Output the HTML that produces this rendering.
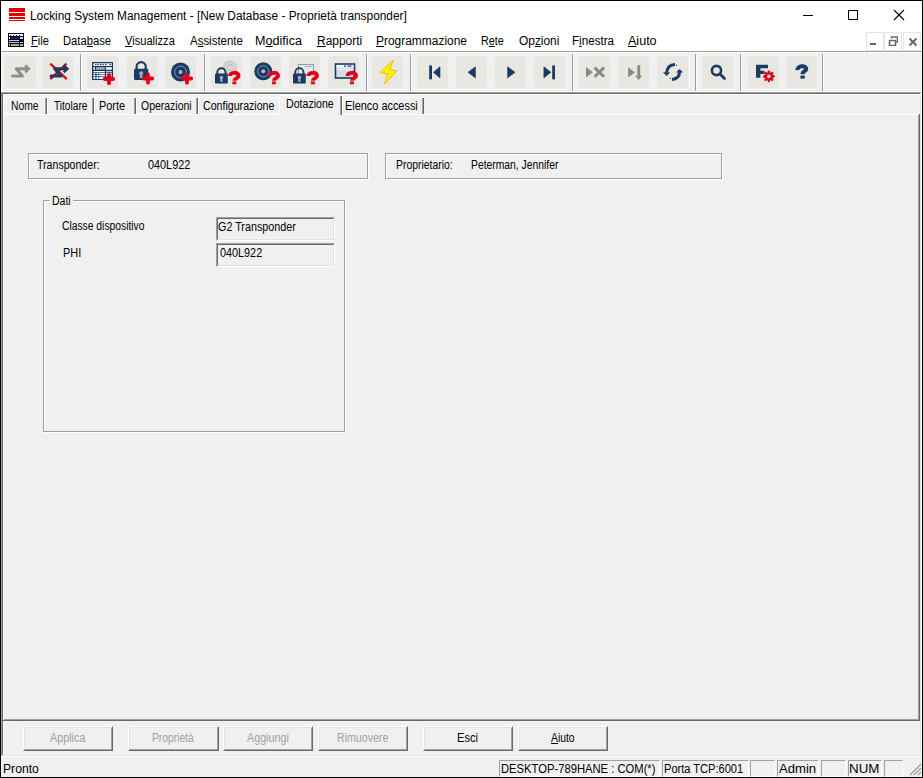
<!DOCTYPE html>
<html><head><meta charset="utf-8"><style>
html,body{margin:0;padding:0}
body{width:923px;height:778px;position:relative;overflow:hidden;background:#f0f0f0;font-family:"Liberation Sans", sans-serif}
body>div,body>span,body>svg{position:absolute;box-sizing:content-box}
.t{white-space:nowrap;line-height:1;transform-origin:0 0}
u{text-decoration:underline;text-underline-offset:1px}
</style></head><body>
<div style="left:0px;top:0px;width:923px;height:778px;background:#f0f0f0;"></div>
<div style="left:1px;top:1px;width:921px;height:50px;background:#ffffff;"></div>
<div style="left:0px;top:0px;width:923px;height:1px;background:#000000;"></div>
<div style="left:0px;top:0px;width:1px;height:778px;background:#000000;"></div>
<div style="left:922px;top:0px;width:1px;height:778px;background:#000000;"></div>
<div style="left:0px;top:777px;width:923px;height:1px;background:#000000;"></div>
<div style="left:9px;top:8px;width:16px;height:4px;background:#e00000;"></div>
<div style="left:9px;top:13px;width:16px;height:3px;background:#e00000;"></div>
<div style="left:9px;top:17px;width:16px;height:2px;background:#e00000;"></div>
<div style="left:9px;top:20px;width:16px;height:1px;background:#e00000;"></div>
<div style="left:803px;top:15px;width:10px;height:1px;background:#000;"></div>
<div style="left:848px;top:10px;width:8px;height:8px;border:1px solid #000"></div>
<svg style="left:893px;top:9px" width="12" height="12"><path d="M1 1L11 11M11 1L1 11" stroke="#000" stroke-width="1.1"/></svg>
<svg style="left:8px;top:33px" width="16" height="14" viewBox="0 0 16 14">
<rect x="0" y="0" width="16" height="14" fill="#000"/>
<rect x="1" y="1" width="14" height="2" fill="#fff"/>
<rect x="2" y="2" width="1" height="1" fill="#00c"/><rect x="5" y="2" width="1" height="1" fill="#00c"/><rect x="8" y="2" width="1" height="1" fill="#00c"/><rect x="11" y="2" width="1" height="1" fill="#00c"/>
<rect x="1" y="4" width="1" height="2" fill="#fff"/><rect x="3" y="4" width="8" height="2" fill="#0018a8"/><rect x="12" y="4" width="3" height="2" fill="#ddd"/>
<rect x="1" y="7" width="10" height="1" fill="#ccc"/><rect x="12" y="7" width="3" height="1" fill="#0018a8"/>
<rect x="1" y="9" width="10" height="1" fill="#ccc"/><rect x="12" y="9" width="3" height="1" fill="#ccc"/>
<rect x="1" y="11" width="1" height="2" fill="#ccc"/><rect x="3" y="11" width="8" height="2" fill="#aaa"/><rect x="12" y="11" width="3" height="2" fill="#aaa"/>
</svg>
<div style="left:866px;top:32px;width:16px;height:17px;border:1px solid #e6e6e6"></div>
<div style="left:884px;top:32px;width:16px;height:17px;border:1px solid #e6e6e6"></div>
<div style="left:903px;top:32px;width:16px;height:17px;border:1px solid #e6e6e6"></div>
<div style="left:870px;top:43px;width:6px;height:2px;background:#5f6873;"></div>
<svg style="left:888px;top:36px" width="10" height="10"><rect x="1.5" y="4.5" width="6" height="5" fill="none" stroke="#5f6873" stroke-width="1.5"/><path d="M3.5 2.5V1h6v5h-1.5" fill="none" stroke="#5f6873" stroke-width="1.5"/></svg>
<svg style="left:908px;top:37px" width="10" height="10"><path d="M1.5 1.5L8.5 8.5M8.5 1.5L1.5 8.5" stroke="#5f6873" stroke-width="2"/></svg>
<div style="left:1px;top:51px;width:921px;height:1px;background:#a0a0a0;"></div>
<div style="left:1px;top:52px;width:921px;height:1px;background:#ffffff;"></div>
<div style="left:1px;top:52px;width:1px;height:40px;background:#ffffff;"></div>
<div style="left:1px;top:91px;width:921px;height:1px;background:#ffffff;"></div>
<div style="left:5px;top:56px;width:31px;height:32px;background:#e8e7e1;border-radius:4px"></div>
<div style="left:42px;top:56px;width:31px;height:32px;background:#e8e7e1;border-radius:4px"></div>
<div style="left:87px;top:56px;width:31px;height:32px;background:#e8e7e1;border-radius:4px"></div>
<div style="left:127px;top:56px;width:31px;height:32px;background:#e8e7e1;border-radius:4px"></div>
<div style="left:165px;top:56px;width:31px;height:32px;background:#e8e7e1;border-radius:4px"></div>
<div style="left:211px;top:56px;width:31px;height:32px;background:#e8e7e1;border-radius:4px"></div>
<div style="left:250px;top:56px;width:31px;height:32px;background:#e8e7e1;border-radius:4px"></div>
<div style="left:289px;top:56px;width:31px;height:32px;background:#e8e7e1;border-radius:4px"></div>
<div style="left:328px;top:56px;width:31px;height:32px;background:#e8e7e1;border-radius:4px"></div>
<div style="left:372px;top:56px;width:31px;height:32px;background:#e8e7e1;border-radius:4px"></div>
<div style="left:417px;top:56px;width:31px;height:32px;background:#e8e7e1;border-radius:4px"></div>
<div style="left:456px;top:56px;width:31px;height:32px;background:#e8e7e1;border-radius:4px"></div>
<div style="left:495px;top:56px;width:31px;height:32px;background:#e8e7e1;border-radius:4px"></div>
<div style="left:534px;top:56px;width:31px;height:32px;background:#e8e7e1;border-radius:4px"></div>
<div style="left:579px;top:56px;width:31px;height:32px;background:#e8e7e1;border-radius:4px"></div>
<div style="left:618px;top:56px;width:31px;height:32px;background:#e8e7e1;border-radius:4px"></div>
<div style="left:657px;top:56px;width:31px;height:32px;background:#e8e7e1;border-radius:4px"></div>
<div style="left:702px;top:56px;width:31px;height:32px;background:#e8e7e1;border-radius:4px"></div>
<div style="left:748px;top:56px;width:31px;height:32px;background:#e8e7e1;border-radius:4px"></div>
<div style="left:786px;top:56px;width:31px;height:32px;background:#e8e7e1;border-radius:4px"></div>
<div style="left:80px;top:54px;width:1px;height:37px;background:#9a9a9a;"></div>
<div style="left:81px;top:54px;width:1px;height:37px;background:#ffffff;"></div>
<div style="left:204px;top:54px;width:1px;height:37px;background:#9a9a9a;"></div>
<div style="left:205px;top:54px;width:1px;height:37px;background:#ffffff;"></div>
<div style="left:366px;top:54px;width:1px;height:37px;background:#9a9a9a;"></div>
<div style="left:367px;top:54px;width:1px;height:37px;background:#ffffff;"></div>
<div style="left:410px;top:54px;width:1px;height:37px;background:#9a9a9a;"></div>
<div style="left:411px;top:54px;width:1px;height:37px;background:#ffffff;"></div>
<div style="left:572px;top:54px;width:1px;height:37px;background:#9a9a9a;"></div>
<div style="left:573px;top:54px;width:1px;height:37px;background:#ffffff;"></div>
<div style="left:695px;top:54px;width:1px;height:37px;background:#9a9a9a;"></div>
<div style="left:696px;top:54px;width:1px;height:37px;background:#ffffff;"></div>
<div style="left:740px;top:54px;width:1px;height:37px;background:#9a9a9a;"></div>
<div style="left:741px;top:54px;width:1px;height:37px;background:#ffffff;"></div>
<div style="left:822px;top:54px;width:1px;height:37px;background:#9a9a9a;"></div>
<div style="left:823px;top:54px;width:1px;height:37px;background:#ffffff;"></div>
<svg style="left:0;top:0" width="923" height="778"><path d="M12.5 76H22.5L16.2 68.8H27.5" fill="none" stroke="#8e8e8e" stroke-width="3" stroke-linejoin="round" stroke-linecap="round"/><path d="M25.2 65.4L28.8 68.8L25.2 72.2" fill="none" stroke="#8e8e8e" stroke-width="2.6" stroke-linejoin="miter"/><path d="M50.3 63.6L66.8 79.2M66.5 63.6L50.3 79.2" stroke="#e3001b" stroke-width="2.3"/><path d="M51.0 76H61.0L54.7 68.8H66.0" fill="none" stroke="#1a3a64" stroke-width="3" stroke-linejoin="round" stroke-linecap="round"/><path d="M63.7 65.4L67.3 68.8L63.7 72.2" fill="none" stroke="#1a3a64" stroke-width="2.6" stroke-linejoin="miter"/><rect x="92" y="62" width="21" height="18" fill="#1a3a64"/><rect x="93.3" y="63.3" width="18.5" height="2.6" fill="#fff"/><rect x="95" y="64.1" width="1.6" height="1" fill="#1a3a64"/><rect x="97.5" y="64.1" width="1.6" height="1" fill="#1a3a64"/><rect x="100" y="64.1" width="1.6" height="1" fill="#1a3a64"/><rect x="102.5" y="64.1" width="1.6" height="1" fill="#1a3a64"/><rect x="105" y="64.1" width="1.6" height="1" fill="#1a3a64"/><rect x="109.5" y="64.1" width="1.6" height="1" fill="#1a3a64"/><rect x="93.4" y="67.2" width="1.6" height="2.5" fill="#fff"/><rect x="96" y="67.2" width="8.8" height="2.5" fill="#a9a7c6"/><rect x="106" y="67.2" width="5.8" height="2.5" fill="#fff"/><rect x="93.4" y="71" width="11.4" height="1.3" fill="#fff"/><rect x="106" y="71" width="5.8" height="1.3" fill="#c8cad8"/><rect x="93.4" y="73" width="2" height="1.4" fill="#fff"/><rect x="96.5" y="73" width="2" height="1.4" fill="#fff"/><rect x="99.2" y="73" width="5.6" height="1.4" fill="#fff"/><rect x="106" y="73" width="5.8" height="1.4" fill="#fff"/><rect x="93.4" y="75" width="2" height="1.4" fill="#fff"/><rect x="96.5" y="75" width="2" height="1.4" fill="#fff"/><rect x="99.2" y="75" width="5.6" height="1.4" fill="#fff"/><rect x="106" y="75" width="5.8" height="1.4" fill="#fff"/><rect x="93.4" y="77.1" width="2" height="1.9" fill="#fff"/><rect x="96.5" y="77.1" width="2" height="1.9" fill="#fff"/><rect x="99.2" y="77.1" width="4.5" height="1.9" fill="#fff"/><path d="M104.8 79H113.2M109 74.8V83.2" stroke="#e3001b" stroke-width="3.8" stroke-linecap="round"/><path d="M136.574 69.8V66.6485A4.5760000000000005 4.5760000000000005 0 0 1 145.726 66.6485V69.8" fill="none" stroke="#1a3a64" stroke-width="2.15"/><rect x="134" y="68.8" width="14.3" height="11.200000000000003" rx="1.2" fill="#1a3a64"/><circle cx="141.15" cy="73.28" r="2.00" fill="#a8a6c0"/><path d="M140.15 73.28H142.15L142.58 77.98H139.72Z" fill="#a8a6c0"/><path d="M143.8 78.5H152.2M148 74.3V82.7" stroke="#e3001b" stroke-width="3.8" stroke-linecap="round"/><circle cx="180.5" cy="72" r="9.5" fill="#1a3a64"/><circle cx="180.5" cy="72" r="5.89" fill="none" stroke="#8ea0b8" stroke-width="0.9"/><circle cx="180.5" cy="72" r="2" fill="#b8b4c8"/><path d="M182.8 78.5H191.2M187 74.3V82.7" stroke="#e3001b" stroke-width="3.8" stroke-linecap="round"/><circle cx="230" cy="67.5" r="7" fill="#c9c9c9"/><circle cx="230" cy="67.5" r="4.5" fill="none" stroke="#e4e4e4" stroke-width="1"/><circle cx="230" cy="67.5" r="1.5" fill="#e4e4e4"/><path d="M217.304 74.4V72.256A4.096 4.096 0 0 1 225.496 72.256V74.4" fill="none" stroke="#1a3a64" stroke-width="1.92"/><rect x="215" y="73.4" width="12.8" height="10.199999999999989" rx="1.2" fill="#1a3a64"/><circle cx="221.4" cy="77.48" r="1.79" fill="#a8a6c0"/><path d="M220.50 77.48H222.30L222.68 81.76H220.12Z" fill="#a8a6c0"/><path d="M230 76.1C230 71.9 238.6 71.7 238.6 75.7C238.6 78.3 234.4 78.1 234.4 80.7" fill="none" stroke="#e3001b" stroke-width="3.9"/><rect x="232.4" y="81.5" width="4" height="2.8" fill="#e3001b"/><circle cx="263.3" cy="71.3" r="9" fill="#1a3a64"/><circle cx="263.3" cy="71.3" r="5.58" fill="none" stroke="#8ea0b8" stroke-width="0.9"/><circle cx="263.3" cy="71.3" r="2" fill="#b8b4c8"/><path d="M269.5 76.1C269.5 71.9 278.1 71.7 278.1 75.7C278.1 78.3 273.9 78.1 273.9 80.7" fill="none" stroke="#e3001b" stroke-width="3.9"/><rect x="271.9" y="81.5" width="4" height="2.8" fill="#e3001b"/><rect x="298.5" y="64.5" width="15" height="10" fill="#e9e9ec" stroke="#8f9bb0" stroke-width="1"/><rect x="305" y="66" width="1.5" height="1" fill="#8f9bb0"/><rect x="307.5" y="66" width="4" height="1" fill="#8f9bb0"/><path d="M295.304 74.4V72.256A4.096 4.096 0 0 1 303.496 72.256V74.4" fill="none" stroke="#1a3a64" stroke-width="1.92"/><rect x="293" y="73.4" width="12.8" height="10.199999999999989" rx="1.2" fill="#1a3a64"/><circle cx="299.4" cy="77.48" r="1.79" fill="#a8a6c0"/><path d="M298.50 77.48H300.30L300.68 81.76H298.12Z" fill="#a8a6c0"/><path d="M308.5 76.1C308.5 71.9 317.1 71.7 317.1 75.7C317.1 78.3 312.9 78.1 312.9 80.7" fill="none" stroke="#e3001b" stroke-width="3.9"/><rect x="310.9" y="81.5" width="4" height="2.8" fill="#e3001b"/><rect x="335.5" y="64" width="19" height="14" fill="#d6dce6" stroke="#1a3a64" stroke-width="1.6"/><rect x="336.5" y="65" width="17" height="2.5" fill="#f4f6fa"/><rect x="336.5" y="69" width="17" height="1" fill="#eef1f6"/><rect x="344" y="65.5" width="2" height="1.2" fill="#1a3a64"/><rect x="347.5" y="65.5" width="4" height="1.2" fill="#1a3a64"/><path d="M347.5 76.1C347.5 71.9 356.1 71.7 356.1 75.7C356.1 78.3 351.9 78.1 351.9 80.7" fill="none" stroke="#e3001b" stroke-width="3.9"/><rect x="349.9" y="81.5" width="4" height="2.8" fill="#e3001b"/><path d="M393 60L380 72.5L387.5 74L384.5 84L397 71L390 69.5Z" fill="#fff000" stroke="#f2b800" stroke-width="0.9" stroke-linejoin="round"/><rect x="429.2" y="65.2" width="2.8" height="14.3" rx="1" fill="#1a3a64"/><path d="M440 66.8V77.9L433.4 72.3Z" fill="#1a3a64" stroke="#1a3a64" stroke-width="0.6" stroke-linejoin="round"/><path d="M475.4 66.8V77.9L468 72.3Z" fill="#1a3a64" stroke="#1a3a64" stroke-width="0.6" stroke-linejoin="round"/><path d="M507.6 66.8V77.9L515 72.3Z" fill="#1a3a64" stroke="#1a3a64" stroke-width="0.6" stroke-linejoin="round"/><rect x="552.2" y="65.2" width="2.8" height="14.3" rx="1" fill="#1a3a64"/><path d="M543.9 66.8V77.9L550.9 72.3Z" fill="#1a3a64" stroke="#1a3a64" stroke-width="0.6" stroke-linejoin="round"/><path d="M586 66.8V77.6L592.8 72.2Z" fill="#8a8a8a"/><path d="M594.6 67.6L604 76.8M604 67.6L594.6 76.8" stroke="#8a8a8a" stroke-width="3"/><path d="M628.1 67.2V77.6L634.9 72.4Z" fill="#8a8a8a"/><rect x="637.3" y="65.2" width="2.9" height="11" fill="#8a8a8a"/><path d="M634.9 75.8H642.2L638.7 80.1Z" fill="#8a8a8a"/><path d="M675 64.6Q667.5 65 666.6 72.6" fill="none" stroke="#1a3a64" stroke-width="3"/><path d="M663 72.2H670.2L666.6 76Z" fill="#1a3a64"/><path d="M672 79.4Q679.2 79 679.6 72.2" fill="none" stroke="#1a3a64" stroke-width="3"/><path d="M676 72.6H683.2L679.6 69Z" fill="#1a3a64"/><circle cx="676.5" cy="65.2" r="0.6" fill="#1a3a64"/><circle cx="670.4" cy="78.4" r="0.6" fill="#1a3a64"/><circle cx="716.5" cy="70.5" r="4.6" fill="none" stroke="#1a3a64" stroke-width="2.6"/><path d="M720 74L724.5 78.5" stroke="#1a3a64" stroke-width="2.8" stroke-linecap="round"/><path d="M756 64.8H768V68.2H760.4V70.8H764.4V74H760.4V77.8H756Z" fill="#1a3a64"/><circle cx="768.9" cy="76.4" r="4.8" fill="#e8e7e1"/><circle cx="773.50" cy="76.40" r="1.3" fill="#e3001b"/><circle cx="772.15" cy="79.65" r="1.3" fill="#e3001b"/><circle cx="768.90" cy="81.00" r="1.3" fill="#e3001b"/><circle cx="765.65" cy="79.65" r="1.3" fill="#e3001b"/><circle cx="764.30" cy="76.40" r="1.3" fill="#e3001b"/><circle cx="765.65" cy="73.15" r="1.3" fill="#e3001b"/><circle cx="768.90" cy="71.80" r="1.3" fill="#e3001b"/><circle cx="772.15" cy="73.15" r="1.3" fill="#e3001b"/><circle cx="768.9" cy="76.4" r="3" fill="none" stroke="#e3001b" stroke-width="2.4"/><path d="M797.4 70.2C797 65.5 806.3 64.8 806.3 69C806.3 71.2 802.5 71.4 802.5 73.6V74.2" fill="none" stroke="#1a3a64" stroke-width="4"/><rect x="800.4" y="75.6" width="4.4" height="3" fill="#1a3a64"/></svg>
<div style="left:1px;top:92px;width:921px;height:1px;background:#a0a0a0;"></div>
<div style="left:1px;top:93px;width:920px;height:1px;background:#696969;"></div>
<div style="left:1px;top:92px;width:1px;height:665px;background:#a0a0a0;"></div>
<div style="left:2px;top:93px;width:1px;height:663px;background:#696969;"></div>
<div style="left:921px;top:92px;width:1px;height:665px;background:#ffffff;"></div>
<div style="left:920px;top:93px;width:1px;height:663px;background:#e3e3e3;"></div>
<div style="left:1px;top:756px;width:921px;height:1px;background:#ffffff;"></div>
<div style="left:2px;top:755px;width:919px;height:1px;background:#e3e3e3;"></div>
<div style="left:3px;top:94px;width:917px;height:1px;background:#ffffff;"></div>
<div style="left:3px;top:94px;width:1px;height:661px;background:#ffffff;"></div>
<div style="left:3px;top:114px;width:917px;height:1px;background:#ffffff;"></div>
<div style="left:3px;top:114px;width:1px;height:607px;background:#ffffff;"></div>
<div style="left:919px;top:114px;width:1px;height:607px;background:#696969;"></div>
<div style="left:918px;top:115px;width:1px;height:605px;background:#a0a0a0;"></div>
<div style="left:3px;top:720px;width:917px;height:1px;background:#696969;"></div>
<div style="left:4px;top:719px;width:915px;height:1px;background:#a0a0a0;"></div>
<div style="left:6px;top:97px;width:41px;height:17px;background:#f0f0f0"></div>
<div style="left:7px;top:97px;width:39px;height:1px;background:#ffffff;"></div>
<div style="left:6px;top:98px;width:1px;height:16px;background:#ffffff;"></div>
<div style="left:46px;top:98px;width:1px;height:16px;background:#696969;"></div>
<div style="left:45px;top:98px;width:1px;height:16px;background:#a0a0a0;"></div>
<div style="left:47px;top:97px;width:47px;height:17px;background:#f0f0f0"></div>
<div style="left:48px;top:97px;width:45px;height:1px;background:#ffffff;"></div>
<div style="left:47px;top:98px;width:1px;height:16px;background:#ffffff;"></div>
<div style="left:93px;top:98px;width:1px;height:16px;background:#696969;"></div>
<div style="left:92px;top:98px;width:1px;height:16px;background:#a0a0a0;"></div>
<div style="left:94px;top:97px;width:42px;height:17px;background:#f0f0f0"></div>
<div style="left:95px;top:97px;width:40px;height:1px;background:#ffffff;"></div>
<div style="left:94px;top:98px;width:1px;height:16px;background:#ffffff;"></div>
<div style="left:135px;top:98px;width:1px;height:16px;background:#696969;"></div>
<div style="left:134px;top:98px;width:1px;height:16px;background:#a0a0a0;"></div>
<div style="left:136px;top:97px;width:62px;height:17px;background:#f0f0f0"></div>
<div style="left:137px;top:97px;width:60px;height:1px;background:#ffffff;"></div>
<div style="left:136px;top:98px;width:1px;height:16px;background:#ffffff;"></div>
<div style="left:197px;top:98px;width:1px;height:16px;background:#696969;"></div>
<div style="left:196px;top:98px;width:1px;height:16px;background:#a0a0a0;"></div>
<div style="left:198px;top:97px;width:84px;height:17px;background:#f0f0f0"></div>
<div style="left:199px;top:97px;width:82px;height:1px;background:#ffffff;"></div>
<div style="left:198px;top:98px;width:1px;height:16px;background:#ffffff;"></div>
<div style="left:281px;top:98px;width:1px;height:16px;background:#696969;"></div>
<div style="left:280px;top:98px;width:1px;height:16px;background:#a0a0a0;"></div>
<div style="left:342px;top:97px;width:82px;height:17px;background:#f0f0f0"></div>
<div style="left:343px;top:97px;width:80px;height:1px;background:#ffffff;"></div>
<div style="left:342px;top:98px;width:1px;height:16px;background:#ffffff;"></div>
<div style="left:423px;top:98px;width:1px;height:16px;background:#696969;"></div>
<div style="left:422px;top:98px;width:1px;height:16px;background:#a0a0a0;"></div>
<div style="left:279px;top:95px;width:63px;height:20px;background:#f0f0f0"></div>
<div style="left:280px;top:95px;width:61px;height:1px;background:#ffffff;"></div>
<div style="left:279px;top:96px;width:1px;height:19px;background:#ffffff;"></div>
<div style="left:341px;top:96px;width:1px;height:19px;background:#696969;"></div>
<div style="left:340px;top:96px;width:1px;height:19px;background:#a0a0a0;"></div>
<div style="left:280px;top:114px;width:60px;height:1px;background:#f0f0f0;"></div>
<div style="left:29px;top:154px;width:338px;height:24px;border:1px solid #fff"></div>
<div style="left:28px;top:153px;width:338px;height:24px;border:1px solid #a0a0a0"></div>
<div style="left:386px;top:154px;width:335px;height:24px;border:1px solid #fff"></div>
<div style="left:385px;top:153px;width:335px;height:24px;border:1px solid #a0a0a0"></div>
<div style="left:44px;top:201px;width:300px;height:230px;border:1px solid #fff"></div>
<div style="left:43px;top:200px;width:300px;height:230px;border:1px solid #a0a0a0"></div>
<div style="left:50px;top:198px;width:23px;height:5px;background:#f0f0f0;"></div>
<div style="left:216px;top:217px;width:117px;height:22px;border-style:solid;border-width:1px;border-color:#a0a0a0 #fff #fff #a0a0a0"></div>
<div style="left:217px;top:218px;width:115px;height:20px;border-style:solid;border-width:1px;border-color:#696969 #e3e3e3 #e3e3e3 #696969"></div>
<div style="left:216px;top:243px;width:117px;height:22px;border-style:solid;border-width:1px;border-color:#a0a0a0 #fff #fff #a0a0a0"></div>
<div style="left:217px;top:244px;width:115px;height:20px;border-style:solid;border-width:1px;border-color:#696969 #e3e3e3 #e3e3e3 #696969"></div>
<div style="left:23px;top:726px;width:88px;height:23px;border-style:solid;border-width:1px;border-color:#fff #696969 #696969 #fff"></div>
<div style="left:24px;top:727px;width:86px;height:21px;border-style:solid;border-width:1px;border-color:#e3e3e3 #a0a0a0 #a0a0a0 #e3e3e3"></div>
<div style="left:128px;top:726px;width:89px;height:23px;border-style:solid;border-width:1px;border-color:#fff #696969 #696969 #fff"></div>
<div style="left:129px;top:727px;width:87px;height:21px;border-style:solid;border-width:1px;border-color:#e3e3e3 #a0a0a0 #a0a0a0 #e3e3e3"></div>
<div style="left:223px;top:726px;width:88px;height:23px;border-style:solid;border-width:1px;border-color:#fff #696969 #696969 #fff"></div>
<div style="left:224px;top:727px;width:86px;height:21px;border-style:solid;border-width:1px;border-color:#e3e3e3 #a0a0a0 #a0a0a0 #e3e3e3"></div>
<div style="left:318px;top:726px;width:88px;height:23px;border-style:solid;border-width:1px;border-color:#fff #696969 #696969 #fff"></div>
<div style="left:319px;top:727px;width:86px;height:21px;border-style:solid;border-width:1px;border-color:#e3e3e3 #a0a0a0 #a0a0a0 #e3e3e3"></div>
<div style="left:423px;top:726px;width:88px;height:23px;border-style:solid;border-width:1px;border-color:#fff #696969 #696969 #fff"></div>
<div style="left:424px;top:727px;width:86px;height:21px;border-style:solid;border-width:1px;border-color:#e3e3e3 #a0a0a0 #a0a0a0 #e3e3e3"></div>
<div style="left:518px;top:726px;width:88px;height:23px;border-style:solid;border-width:1px;border-color:#fff #696969 #696969 #fff"></div>
<div style="left:519px;top:727px;width:86px;height:21px;border-style:solid;border-width:1px;border-color:#e3e3e3 #a0a0a0 #a0a0a0 #e3e3e3"></div>
<div style="left:499px;top:760px;width:159px;height:15px;border-style:solid;border-width:1px;border-color:#a0a0a0 #fff #fff #a0a0a0"></div>
<div style="left:662px;top:760px;width:85px;height:15px;border-style:solid;border-width:1px;border-color:#a0a0a0 #fff #fff #a0a0a0"></div>
<div style="left:750px;top:760px;width:23px;height:15px;border-style:solid;border-width:1px;border-color:#a0a0a0 #fff #fff #a0a0a0"></div>
<div style="left:777px;top:760px;width:40px;height:15px;border-style:solid;border-width:1px;border-color:#a0a0a0 #fff #fff #a0a0a0"></div>
<div style="left:821px;top:760px;width:23px;height:15px;border-style:solid;border-width:1px;border-color:#a0a0a0 #fff #fff #a0a0a0"></div>
<div style="left:848px;top:760px;width:32px;height:15px;border-style:solid;border-width:1px;border-color:#a0a0a0 #fff #fff #a0a0a0"></div>
<div style="left:884px;top:760px;width:17px;height:15px;border-style:solid;border-width:1px;border-color:#a0a0a0 #fff #fff #a0a0a0"></div>
<svg style="left:908px;top:762px" width="14" height="14"><path d="M13 2L2 13M13 6L6 13M13 10L10 13" stroke="#a0a0a0" stroke-width="1.4"/></svg>
<span class="t" style="left:30.01px;top:10px;font-size:12px;color:#000;transform:scaleX(0.9894)">Locking System Management - [New Database - Proprietà transponder]</span>
<span class="t" style="left:31.20px;top:35px;font-size:12px;color:#000;transform:scaleX(0.9263)"><u>F</u>ile</span>
<span class="t" style="left:62.76px;top:35px;font-size:12px;color:#000;transform:scaleX(0.9360)">Data<u>b</u>ase</span>
<span class="t" style="left:124.60px;top:35px;font-size:12px;color:#000;transform:scaleX(0.9259)"><u>V</u>isualizza</span>
<span class="t" style="left:189.50px;top:35px;font-size:12px;color:#000;transform:scaleX(0.9545)">A<u>s</u>sistente</span>
<span class="t" style="left:255.45px;top:35px;font-size:12px;color:#000;transform:scaleX(1.0500)">M<u>o</u>difica</span>
<span class="t" style="left:317.00px;top:35px;font-size:12px;color:#000;transform:scaleX(0.9956)"><u>R</u>apporti</span>
<span class="t" style="left:375.90px;top:35px;font-size:12px;color:#000;transform:scaleX(0.9956)"><u>P</u>rogrammazione</span>
<span class="t" style="left:480.60px;top:35px;font-size:12px;color:#000;transform:scaleX(0.8958)">R<u>e</u>te</span>
<span class="t" style="left:518.80px;top:35px;font-size:12px;color:#000;transform:scaleX(0.9925)">Op<u>z</u>ioni</span>
<span class="t" style="left:572.03px;top:35px;font-size:12px;color:#000;transform:scaleX(0.9690)">F<u>i</u>nestra</span>
<span class="t" style="left:628.40px;top:35px;font-size:12px;color:#000;transform:scaleX(1.0444)"><u>A</u>iuto</span>
<span class="t" style="left:10.84px;top:100px;font-size:12px;color:#000;transform:scaleX(0.8581)">Nome</span>
<span class="t" style="left:54.20px;top:100px;font-size:12px;color:#000;transform:scaleX(0.8436)">Titolare</span>
<span class="t" style="left:98.89px;top:100px;font-size:12px;color:#000;transform:scaleX(0.9111)">Porte</span>
<span class="t" style="left:141.40px;top:100px;font-size:12px;color:#000;transform:scaleX(0.8719)">Operazioni</span>
<span class="t" style="left:202.62px;top:100px;font-size:12px;color:#000;transform:scaleX(0.8848)">Configurazione</span>
<span class="t" style="left:285.62px;top:98px;font-size:12px;color:#000;transform:scaleX(0.8830)">Dotazione</span>
<span class="t" style="left:345.49px;top:100px;font-size:12px;color:#000;transform:scaleX(0.9090)">Elenco accessi</span>
<span class="t" style="left:37.30px;top:159px;font-size:12px;color:#000;transform:scaleX(0.8829)">Transponder:</span>
<span class="t" style="left:148.20px;top:159px;font-size:12px;color:#000;transform:scaleX(0.9043)">040L922</span>
<span class="t" style="left:395.63px;top:159px;font-size:12px;color:#000;transform:scaleX(0.8667)">Proprietario:</span>
<span class="t" style="left:470.54px;top:159px;font-size:12px;color:#000;transform:scaleX(0.8614)">Peterman, Jennifer</span>
<span class="t" style="left:51.73px;top:195px;font-size:12px;color:#000;transform:scaleX(0.8750)">Dati</span>
<span class="t" style="left:62.24px;top:220px;font-size:12px;color:#000;transform:scaleX(0.8589)">Classe dispositivo</span>
<span class="t" style="left:62.89px;top:247px;font-size:12px;color:#000;transform:scaleX(0.9083)">PHI</span>
<span class="t" style="left:217.80px;top:221px;font-size:12px;color:#000;transform:scaleX(0.8977)">G2 Transponder</span>
<span class="t" style="left:219.50px;top:247px;font-size:12px;color:#000;transform:scaleX(0.9022)">040L922</span>
<span class="t" style="left:50.00px;top:732px;font-size:12px;color:#a0a0a0;transform:scaleX(0.9000)">Applica</span>
<span class="t" style="left:151.94px;top:732px;font-size:12px;color:#a0a0a0;transform:scaleX(0.8583)">Proprietà</span>
<span class="t" style="left:247.20px;top:732px;font-size:12px;color:#a0a0a0;transform:scaleX(0.8957)">Aggiungi</span>
<span class="t" style="left:336.72px;top:732px;font-size:12px;color:#a0a0a0;transform:scaleX(0.8842)">Rimuovere</span>
<span class="t" style="left:457.28px;top:732px;font-size:12px;color:#000;transform:scaleX(0.9238)">Esci</span>
<span class="t" style="left:551.00px;top:732px;font-size:12px;color:#000;transform:scaleX(0.8630)"><u>A</u>iuto</span>
<span class="t" style="left:2.99px;top:763px;font-size:12px;color:#000;transform:scaleX(1.0147)">Pronto</span>
<span class="t" style="left:501.06px;top:763px;font-size:12px;color:#000;transform:scaleX(0.9354)">DESKTOP-789HANE : COM(*)</span>
<span class="t" style="left:663.88px;top:763px;font-size:12px;color:#000;transform:scaleX(0.9224)">Porta TCP:6001</span>
<span class="t" style="left:779.00px;top:763px;font-size:12px;color:#000;transform:scaleX(1.0909)">Admin</span>
<span class="t" style="left:848.89px;top:763px;font-size:12px;color:#000;transform:scaleX(1.1120)">NUM</span>
</body></html>
